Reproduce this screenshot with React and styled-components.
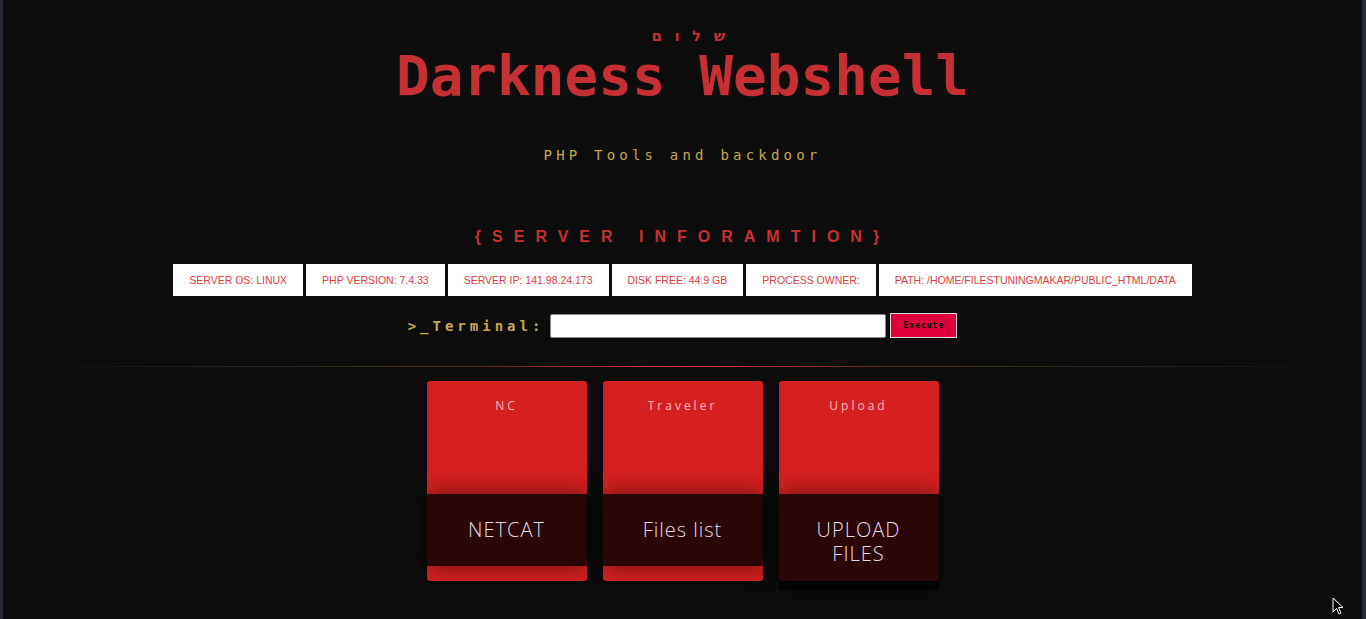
import React from 'react'
import styled, { createGlobalStyle } from 'styled-components'

const GlobalStyle = createGlobalStyle`
html, body {
  margin: 0;
  padding: 0;
  background: #0d0d0d;
}
`

const Page = styled.div`
position: relative;
min-height: 619px;
box-sizing: border-box;
border-left: 3px solid #262a33;
border-right: 4px solid #262a33;
background: #0d0d0d;
display: flex;
flex-direction: column;
align-items: center;
padding-top: 28px;
overflow: hidden;
`

const Greeting = styled.div`
direction: rtl;
font-family: "DejaVu Sans Mono", "DejaVu Sans", monospace;
font-weight: bold;
font-size: 15px;
line-height: 16px;
letter-spacing: 12.5px;
color: #c62f33;
padding-left: 24px;
`

const Title = styled.h1`
margin: 0;
font-family: "DejaVu Sans Mono", monospace;
font-weight: bold;
font-size: 56px;
line-height: 64px;
color: #c62f33;
`

const Subtitle = styled.div`
margin-top: 37px;
font-family: "DejaVu Sans Mono", monospace;
font-size: 14px;
line-height: 20px;
letter-spacing: 4.2px;
color: #c8a84a;
`

const SectionTitle = styled.h2`
margin: 62px 0 0;
font-family: "Liberation Sans", Arial, sans-serif;
font-weight: bold;
font-size: 16px;
line-height: 20px;
letter-spacing: 11px;
color: #c93034;
`

const InfoRow = styled.div`
margin-top: 17px;
display: flex;
gap: 3px;
`

const InfoBox = styled.div`
background: #fff;
height: 32px;
padding: 0 16px;
display: flex;
align-items: center;
font-family: "Liberation Sans", Arial, sans-serif;
font-size: 10.5px;
color: #e53a3f;
white-space: nowrap;
`

const TerminalRow = styled.form`
margin: 17px 0 0;
display: flex;
align-items: center;
`

const TerminalLabel = styled.label`
font-family: "DejaVu Sans Mono", monospace;
font-weight: bold;
font-size: 14px;
letter-spacing: 4px;
color: #c8a84a;
margin-right: 6px;
`

const CommandInput = styled.input`
box-sizing: border-box;
width: 336px;
height: 24px;
border: 1px solid #8a8a8a;
border-radius: 2px;
background: #fff;
outline: none;
`

const ExecuteButton = styled.button`
box-sizing: border-box;
margin-left: 4px;
width: 67px;
height: 25px;
background: #e0003c;
border: 1px solid #d8d8d8;
font-family: "DejaVu Sans Mono", monospace;
font-weight: bold;
font-size: 8px;
letter-spacing: 1px;
color: #000;
padding: 0;
`

const Divider = styled.div`
margin-top: 28px;
width: 100%;
height: 1px;
background: linear-gradient(90deg,
  rgba(30,30,20,0) 2%, #1f1f17 12%, #2e2e1b 25%, #5a2c1d 35%, #b02a28 43%, #e53232 50%,
  #b02a28 57%, #5a2c1d 65%, #2e2e1b 75%, #1f1f17 88%, rgba(30,30,20,0) 98%);
`

const Cards = styled.div`
margin-top: 14px;
display: flex;
gap: 16px;
`

const Card = styled.div`
width: 160px;
height: 200px;
background: #d62020;
border-radius: 3px;
display: grid;
grid-template-rows: 113px auto;
box-shadow: 0 2px 6px rgba(0,0,0,0.4);
`

const CardLabel = styled.div`
padding-top: 17px;
text-align: center;
font-family: "Open Sans", sans-serif;
font-size: 12px;
line-height: 16px;
letter-spacing: 3px;
color: rgba(255, 225, 240, 0.78);
`

const CardPanel = styled.div`
padding: 24px 20px;
background: rgba(0, 0, 0, 0.8);
box-shadow: 0 0 22px rgba(0, 0, 0, 0.55);
text-align: center;
font-family: "Open Sans", sans-serif;
font-weight: 300;
font-size: 20px;
line-height: 24px;
letter-spacing: 1px;
color: #e2dcea;
`

const Cursor = styled.svg`
position: absolute;
right: 18px;
bottom: 4px;
`

const info = [
  'SERVER OS: LINUX',
  'PHP VERSION: 7.4.33',
  'SERVER IP: 141.98.24.173',
  'DISK FREE: 44.9 GB',
  'PROCESS OWNER:',
  'PATH: /HOME/FILESTUNINGMAKAR/PUBLIC_HTML/DATA',
]

const tools = [
  { label: 'NC', name: 'NETCAT' },
  { label: 'Traveler', name: 'Files list' },
  { label: 'Upload', name: 'UPLOAD FILES' },
]

export default function App() {
  return (
    <Page>
      <GlobalStyle />
      <Greeting>שלום</Greeting>
      <Title>Darkness Webshell</Title>
      <Subtitle>PHP Tools and backdoor</Subtitle>
      <SectionTitle>{'{SERVER INFORAMTION}'}</SectionTitle>
      <InfoRow>
        {info.map(item => <InfoBox key={item}>{item}</InfoBox>)}
      </InfoRow>
      <TerminalRow onSubmit={e => e.preventDefault()}>
        <TerminalLabel>&gt;_Terminal:</TerminalLabel>
        <CommandInput type="text" />
        <ExecuteButton type="submit">Execute</ExecuteButton>
      </TerminalRow>
      <Divider />
      <Cards>
        {tools.map(t => (
          <Card key={t.label}>
            <CardLabel>{t.label}</CardLabel>
            <div>
              <CardPanel>{t.name}</CardPanel>
            </div>
          </Card>
        ))}
      </Cards>
      <Cursor width="12" height="18" viewBox="0 0 12 18">
        <path d="M1 1 L1 15 L4.5 11.5 L7 17 L9 16 L6.5 10.5 L11 10.5 Z" fill="#000" stroke="#fff" strokeWidth="1" />
      </Cursor>
    </Page>
  )
}
